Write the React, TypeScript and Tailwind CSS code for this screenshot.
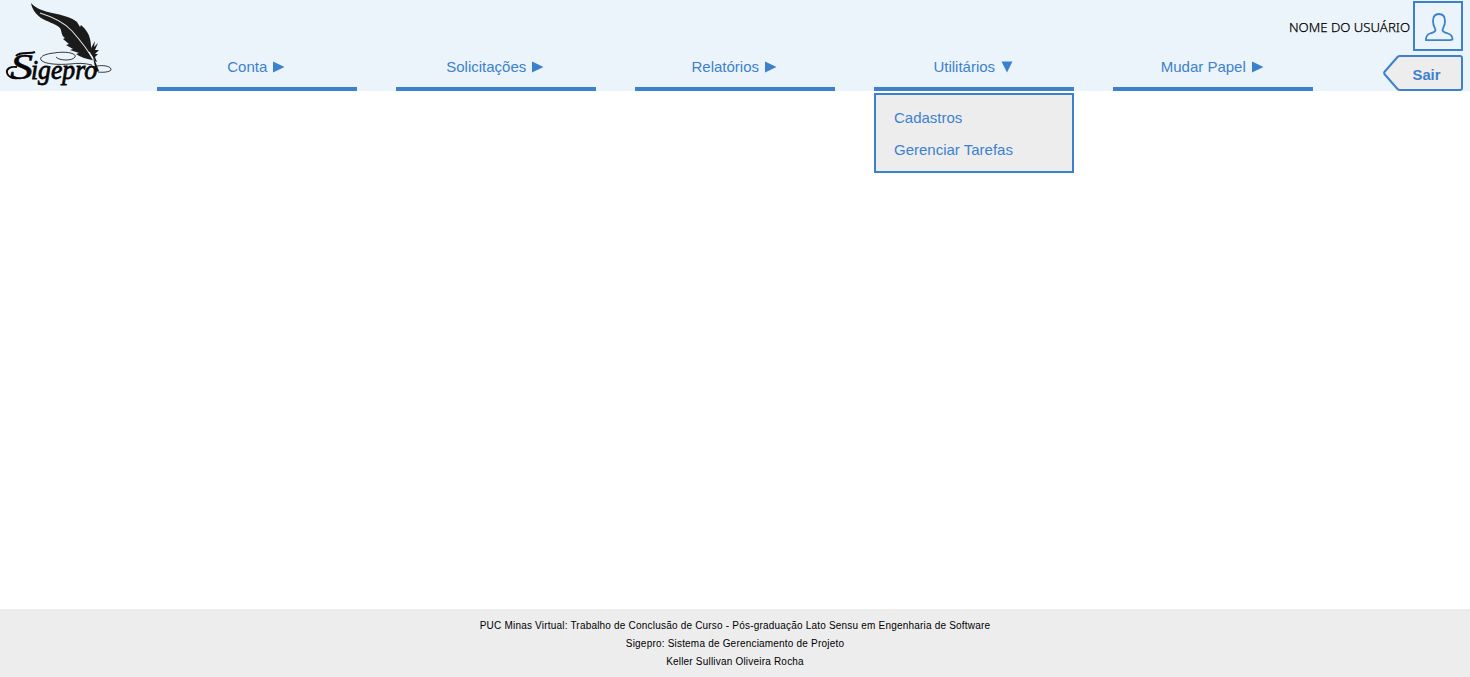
import React from "react";

type MenuItem = { label: string; children?: string[] };

const menu: MenuItem[] = [
  { label: "Conta" },
  { label: "Solicitações" },
  { label: "Relatórios" },
  { label: "Utilitários", children: ["Cadastros", "Gerenciar Tarefas"] },
  { label: "Mudar Papel" },
];

function Logo() {
  return (
    <svg viewBox="0 0 120 91" className="h-[91px] w-[120px] shrink-0" role="img" aria-label="Sigepro">
      <path
        d="M31 3C36 9 44 11 52 13C62 15 71 17 77 22L80 27L81 25C86 29 89 34 90 39C91 43 91 46 91 48L95 41L94 47L98 43L95 50L99 50L95 54L98 54L95 57L97 62L92 60C86 59 80 57 76 54L79 53L70 50L73 49L66 45L69 44L63 39L65 38C61 36 62 31 60 28C55 23 47 22 41 18C35 13 32 9 31 3Z"
        fill="#1b1b1b"
      />
      <path d="M40 13C53 17 64 22 72 31C80 40 88 50 94 61" fill="none" stroke="#dfe5e9" strokeWidth="1.1" />
      <path d="M89 52L94 60L96 71" fill="none" stroke="#f5f7f9" strokeWidth="1.3" />
      <path d="M93 56L99 71L96 72L94 62Z" fill="#111" />
      <path
        d="M56 57C59 61 73 61 75 57C77 53 65 51 54 53C43 54 38 58 42 61C46 64 58 65 70 64C78 63 84 63 92 65M97 66C103 65 110 66 111 69C112 71 106 73 98 72"
        fill="none"
        stroke="#222"
        strokeWidth="0.9"
      />
      <path d="M16 56C18 53 23 53 28 53C31 53 33 53 35 52" fill="none" stroke="#0a0a0a" strokeWidth="2" />
      <path d="M17 67C10 66 6 69 7 73C8 77 13 79 18 78" fill="none" stroke="#0a0a0a" strokeWidth="1.8" />
      <g fill="#050505" stroke="#050505" className="font-['Liberation_Serif',serif] italic">
        <text x="10" y="78.500" textLength="23" lengthAdjust="spacingAndGlyphs" strokeWidth="0.6" className="text-[36px]">S</text>
        <text x="31" y="78.500" textLength="66" lengthAdjust="spacingAndGlyphs" strokeWidth="0.8" className="text-[28px]">igepro</text>
      </g>
    </svg>
  );
}

function Arrow({ open }: { open?: boolean }) {
  return (
    <svg viewBox="0 0 12 12" className="ml-[6px] h-3 w-3" fill="#3d81ce">
      <path d={open ? "M0.5 0.5H11.5L6 11.5Z" : "M0 0.5V11.5L11.5 6Z"} />
    </svg>
  );
}

export default function App() {
  return (
    <div className="flex h-[677px] w-full flex-col bg-white font-['Liberation_Sans',Arial,sans-serif]">
      <header className="flex h-[91px] shrink-0 bg-[#ecf4fb]">
        <Logo />
        <nav className="ml-[37px] flex shrink-0 items-end gap-[39px]">
          {menu.map((item) => (
            <div key={item.label} className="relative w-[200px]">
              <a className="flex h-[44px] items-center justify-center border-b-4 border-[#3d81ce] pr-[1.5px] text-[15px] text-[#3d81ce]">
                {item.label}
                <Arrow open={!!item.children} />
              </a>
              {item.children && (
                <ul className="absolute top-[46px] left-0 h-20 w-[200px] border-2 border-[#3d81ce] bg-[#ededed] px-[18px] py-[7px] text-[15px] leading-8 text-[#3d81ce]">
                  {item.children.map((child) => (
                    <li key={child}>{child}</li>
                  ))}
                </ul>
              )}
            </div>
          ))}
        </nav>
        <div className="mr-[7px] ml-auto flex w-[150px] shrink flex-col items-end gap-1 pt-px">
          <div className="flex h-[50px] items-center">
            <svg viewBox="0 0 124 20" className="h-5 w-[124px] shrink-0">
              <text x="0" y="16" textLength="121" lengthAdjust="spacingAndGlyphs" fill="#000" stroke="#000" strokeWidth="0.25" className="font-['Noto_Sans',sans-serif] text-[12.5px] font-light">
                NOME DO USUÁRIO
              </text>
            </svg>
            <div className="flex size-[50px] shrink-0 items-center justify-center border-2 border-[#3d81ce]">
              <svg viewBox="0 0 50 50" className="size-[50px] shrink-0" fill="none" stroke="#3d81ce" strokeWidth="1.8">
                <path d="M13 39.2C12.8 35 14 33.5 17 32.5C20 31.5 22.5 31 22.5 29C22.5 27 20 26 20 20C20 15 22.5 13 26 13C29.5 13 32 15 32 20C32 26 29.5 27 29.5 29C29.5 31 32 31.5 35 32.5C38 33.5 39.5 35 39.5 38.5L37 39.2Z" />
              </svg>
            </div>
          </div>
          <svg viewBox="0 0 80 36" className="h-9 w-20 shrink-0">
            <path d="M17 1H77Q79 1 79 3V33Q79 35 77 35H17Q15.5 35 14.5 34L1.8 19.5Q0.5 18 1.8 16.5L14.5 2Q15.5 1 17 1Z" fill="#ededed" stroke="#3d81ce" strokeWidth="2" />
            <text x="29.5" y="24.5" textLength="28" lengthAdjust="spacingAndGlyphs" fill="#3d81ce" className="font-['Liberation_Sans',sans-serif] text-[15.5px] font-bold">Sair</text>
          </svg>
        </div>
      </header>
      <main className="flex-1" />
      <footer className="h-[68px] shrink-0 bg-[#ededed] pt-2 text-center text-[10px] leading-[18px] tracking-[0.2px] text-black">
        <p>PUC Minas Virtual: Trabalho de Conclusão de Curso - Pós-graduação Lato Sensu em Engenharia de Software</p>
        <p>Sigepro: Sistema de Gerenciamento de Projeto</p>
        <p>Keller Sullivan Oliveira Rocha</p>
      </footer>
    </div>
  );
}
